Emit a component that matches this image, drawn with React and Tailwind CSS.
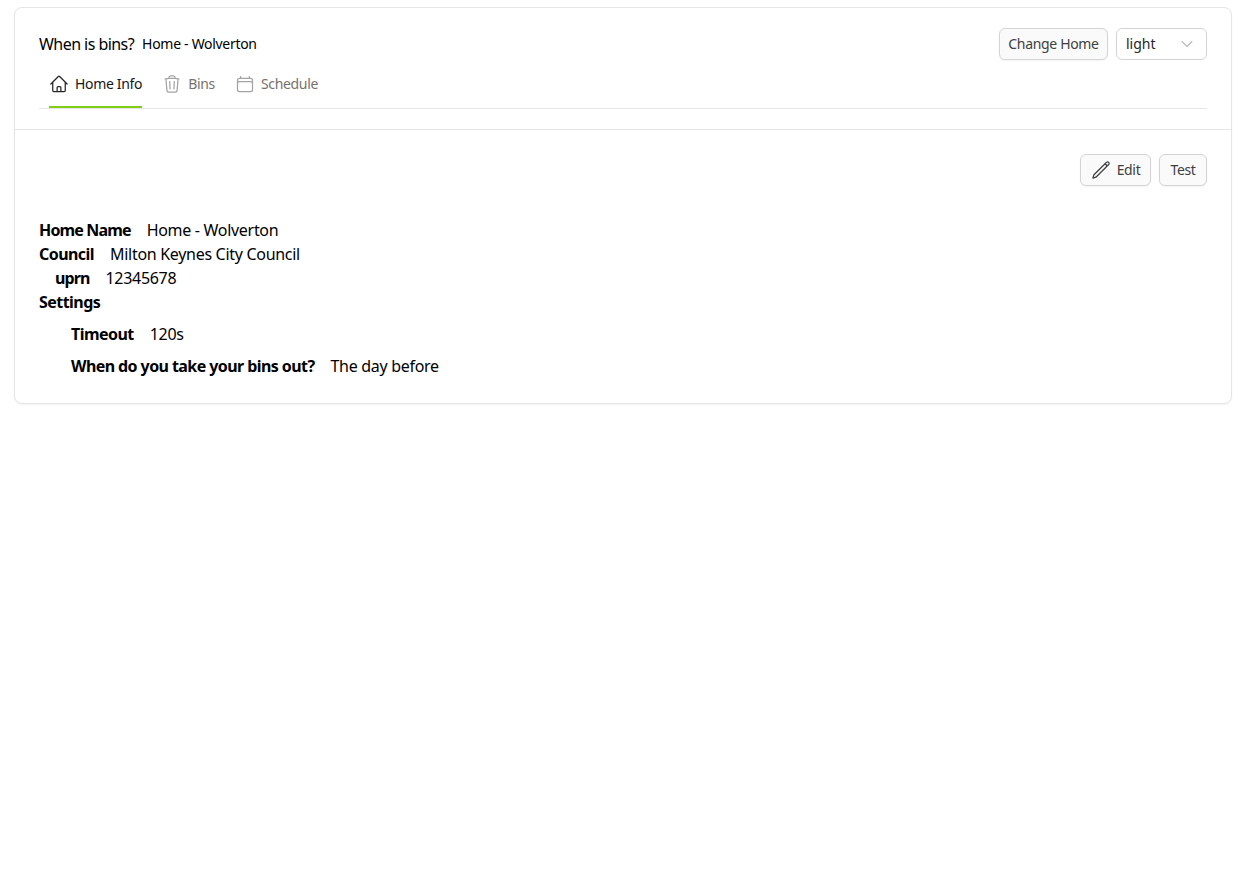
import React from "react";
import { HiOutlineHome, HiOutlineTrash, HiOutlineCalendar, HiOutlinePencil } from "react-icons/hi2";
import { ChevronDown } from "lucide-react";

const font = "font-['Noto_Sans','Open_Sans',sans-serif]";
const btn = "h-8 rounded-md border border-[#d4d4d4] bg-[#fafafa] text-sm tracking-[-0.33px] text-[#404040] flex items-center justify-center shadow-[0_1px_2px_rgba(0,0,0,0.05)]";

function Tab({ icon, label, active }) {
  return (
    <div className={`flex h-12 items-center gap-[6px] pt-[2px] text-sm tracking-[-0.33px] border-b-2 ${active ? "border-[#84cc16] text-[#171717]" : "border-transparent text-[#78716c]"}`}>
      {icon}
      <span>{label}</span>
    </div>
  );
}

function Row({ label, value, className = "", labelClass = "tracking-[-0.55px]" }) {
  return (
    <div className={`flex gap-4 text-base leading-6 text-black ${className}`}>
      <span className={`font-bold ${labelClass}`}>{label}</span>
      <span className="tracking-[-0.3px]">{value}</span>
    </div>
  );
}

export default function App() {
  return (
    <div className={`${font} min-h-[896px] bg-white pt-[7px] pl-[14px] pr-[20px]`}>
      <div className="rounded-lg border border-[#e5e5e5] bg-white shadow-[0_1px_2px_rgba(0,0,0,0.05)]">
        <div className="border-b border-[#e5e5e5] px-6 pt-5 pb-5">
          <div className="flex items-center justify-between">
            <div className="flex items-center gap-2 text-black">
              <span className="text-base tracking-[-0.55px]">When is bins?</span>
              <span className="text-sm tracking-[-0.3px]">Home - Wolverton</span>
            </div>
            <div className="flex gap-2">
              <div className={`${btn} w-[109px]`}>Change Home</div>
              <div className="flex h-8 w-[91px] items-center justify-between rounded-md border border-[#d4d4d4] bg-white pl-[9px] pr-[9px] text-sm text-[#262626]">
                <span>light</span>
                <ChevronDown size={20} strokeWidth={1.25} className="text-[#a3a3a3]" />
              </div>
            </div>
          </div>
          <div className="flex gap-5 border-b border-[#e5e5e5] pl-[10px]">
            <Tab active label="Home Info" icon={<HiOutlineHome size={20} className="text-[#262626]" />} />
            <Tab label="Bins" icon={<HiOutlineTrash size={20} className="text-[#a3a3a3]" />} />
            <Tab label="Schedule" icon={<HiOutlineCalendar size={20} className="text-[#a3a3a3]" />} />
          </div>
        </div>
        <div className="px-6 pt-6 pb-[25px]">
          <div className="flex justify-end gap-2">
            <div className={`${btn} w-[71px] gap-[6px]`}><HiOutlinePencil size={20} />Edit</div>
            <div className={`${btn} w-[48px]`}>Test</div>
          </div>
          <div className="mt-8">
            <Row label="Home Name" value="Home - Wolverton" labelClass="tracking-[-0.85px]" />
            <Row label="Council" value="Milton Keynes City Council" />
            <Row label="uprn" value="12345678" className="pl-4" labelClass="tracking-[-0.9px]" />
            <Row label="Settings" value="" />
            <div className="mt-2 flex flex-col gap-2 pl-8">
              <Row label="Timeout" value="120s" />
              <Row label="When do you take your bins out?" value="The day before" labelClass="tracking-[-0.58px]" />
            </div>
          </div>
        </div>
      </div>
    </div>
  );
}
